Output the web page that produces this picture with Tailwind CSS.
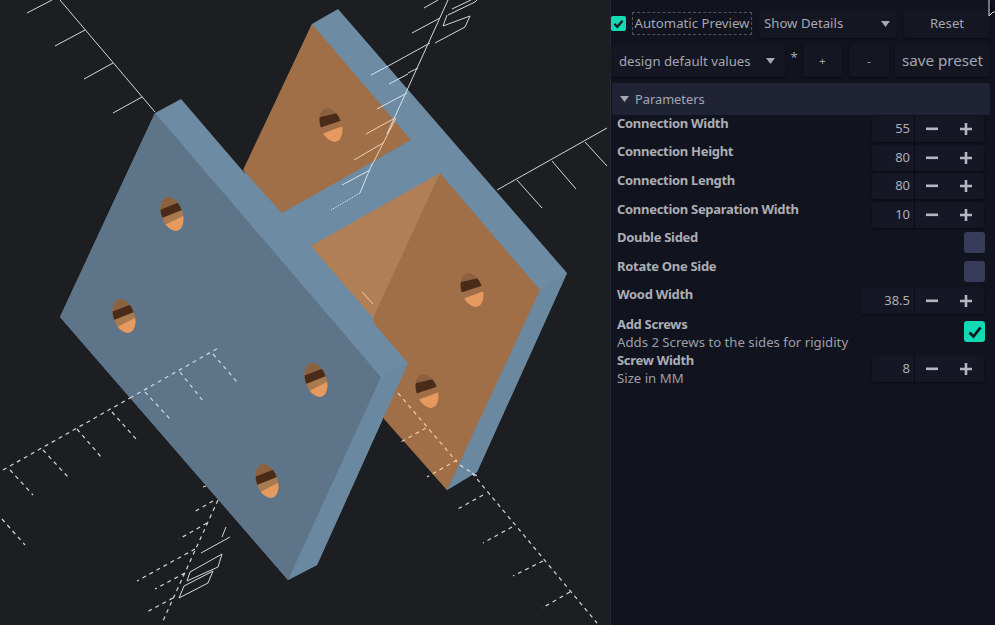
<!DOCTYPE html>
<html lang="en">
<head>
  <meta charset="UTF-8">
  <title>Customizer</title>
  <script src="https://cdn.jsdelivr.net/npm/@tailwindcss/browser@4"></script>
</head>
<body class="bg-[#1c1e21] overflow-hidden">
  <div class="relative flex w-[995px] h-[625px] overflow-hidden font-['Noto_Sans',sans-serif]">

    <!-- 3d preview -->
    <svg class="w-[610px] h-[625px] shrink-0" viewBox="0 0 610 625" fill="none">
      <defs>
        <clipPath id="holeClip"><ellipse rx="10.5" ry="17.5" transform="rotate(-19)"/></clipPath>
        <g id="hole" clip-path="url(#holeClip)">
          <rect x="-15" y="-20" width="30" height="40" fill="#a97a50"/>
          <polygon points="-15,-20 15,-20 15,-15 -15,-3" fill="#8c6140"/>
          <polygon points="-15,-3 15,-15 15,-6 -15,6" fill="#4a2b1a"/>
          <polygon points="-15,15 15,0 15,20 -15,20" fill="#e79a60"/>
        </g>
        <g id="holeBack" clip-path="url(#holeClip)">
          <polygon points="-15,-20 15,-20 15,-14 -15,-7" fill="#8c6140"/>
          <polygon points="-15,-7 15,-14 15,-6 -15,4" fill="#4a2b1a"/>
          <polygon points="-15,11 15,0 15,20 -15,20" fill="#e79a60"/>
        </g>
      </defs>

      <!-- back plate -->
      <polygon points="312,24 338,9 567,273 477,472 447,490 282,300 244,170" fill="#6d8ba3"/>
      <polygon points="540,290 567,273 477,472 447,490" fill="#6a88a0"/>
      <polygon points="312,24 243,170 282,213 411,140" fill="#a06f47"/>
      <polygon points="440,173 540,290 447,490 384,419 373,318" fill="#a06f47"/>
      <polygon points="440,173 311,246 373,318" fill="#b17f56"/>
      <use href="#holeBack" x="331" y="125"/>
      <use href="#holeBack" x="472" y="290"/>
      <use href="#holeBack" x="427" y="391"/>

      <!-- axes behind the plate -->
      <g stroke="#d4d6d8" stroke-width="1">
        <path d="M60 0 155 112M52 0 27 13M85 30 55 46M113 63 84 79M142 97 113 113"/>
        <path d="M497 190 607 128M517 180 542 208M552 161 576 189M585 142 607 166"/>
        <path d="M448 0 408 88M438 0 424 8M440 18 412 33M430 43 390 65M418 68 408 73"/>
        <path d="M452 9 471 0M448 15 475 2 477 0M447 15 443 26 470 16 465 27 435 43"/>
      </g>
      <g stroke="#d8e4ee" stroke-width="1">
        <path d="M408 88 387 134M390 65 371 75M408 74 389 84M407 93 377 109"/>
        <path d="M372 164 360 193M370 170 342 185"/>
        <path d="M360 193 331 210" stroke-dasharray="1.5 1.2"/>
      </g>
      <g stroke="#f0cfa8" stroke-width="1">
        <path d="M396 118 372 165M395 118 366 134M383 143 354 160"/>
        <path d="M362 292 373 304"/>
      </g>

      <!-- dashed axes -->
      <g stroke="#f0cfa8" stroke-width="1.2" stroke-dasharray="4 4">
        <path d="M398 393 457 462M426 428 399 443M457 460 427 477"/>
      </g>
      <path d="M460 465 477 476" stroke="#cfe0ee" stroke-width="1.2" stroke-dasharray="4 4"/>
      <g stroke="#d4d6d8" stroke-width="1.2" stroke-dasharray="4 4">
        <path d="M472 473 597 623M483 495 456 510M512 527 483 543M543 561 513 576M570 592 542 608"/>
      </g>

      <!-- front plate -->
      <polygon points="155,113 181,99 408,363 317,565 288,580 60,317" fill="#6d8ba3"/>
      <polygon points="381,377 408,363 317,565 288,580" fill="#6a88a0"/>
      <polygon points="155,113 60,317 288,580 381,377" fill="#5d7489"/>
      <use href="#hole" x="172" y="214"/>
      <use href="#hole" x="124" y="316"/>
      <use href="#hole" x="316" y="380"/>
      <use href="#hole" x="267" y="481"/>

      <g stroke="#d4d6d8" stroke-width="1.2" stroke-dasharray="4 4">
        <path d="M3 470 130 398M10 470 33 495M43 450 68 477M77 429 102 458M112 412 136 439M2 519 25 545"/>
        <path d="M218 500 162 623M213 501 192 513M207 523 179 539M195 549 137 581M185 573 155 589M173 598 145 613M203 487 206 486"/>
      </g>
      <g stroke="#c6dbea" stroke-width="1.2" stroke-dasharray="4 4">
        <path d="M130 398 220 347M145 392 170 419M180 372 203 401M213 354 237 382"/>
      </g>
      <path d="M226 527 222 537M230 537 201 553M222 554 190 572 187 581 218 567ZM213 571 208 583 179 598 184 586Z" stroke="#d4d6d8" stroke-width="1"/>
    </svg>

    <!-- side panel -->
    <div class="w-[385px] h-[625px] bg-[#11131e] border-l border-[#262a38] text-[#a4a7b0]">
      <div class="flex items-center pt-[9px] h-[38px] text-[13.2px]">
        <span class="w-[15px] h-[15px] rounded-[2px] bg-[#12d8b4] flex items-center justify-center">
          <svg class="w-[13px] h-[13px]" viewBox="0 0 16 16" fill="none"><path d="M3 8.5 6.5 12 13 4.5" stroke="#14161f" stroke-width="2.8"/></svg>
        </span>
        <span class="ml-[6px] w-[120px] h-[23px] border border-dashed border-[#50535f] flex items-center justify-center whitespace-nowrap">Automatic Preview</span>
        <div class="ml-[7px] w-[138px] h-[29px] rounded-[3px] bg-[#141622] shadow-[0_1px_2px_#0a0b12] flex items-center justify-between pl-[5px] pr-[7px]">
          <span>Show Details</span>
          <svg class="w-[9px] h-[6px]" viewBox="0 0 9 6"><polygon points="0,0 9,0 4.5,6" fill="#a4a7b0"/></svg>
        </div>
        <div class="ml-[7px] w-[86px] h-[29px] rounded-[3px] bg-[#141622] shadow-[0_1px_2px_#0a0b12] flex items-center justify-center">Reset</div>
      </div>

      <div class="flex items-center mt-[7px] h-[32px]">
        <div class="w-[174px] h-[32px] rounded-[3px] bg-[#141622] shadow-[0_1px_2px_#0a0b12] flex items-center justify-between pl-[8px] pr-[10px] text-[13.2px]">
          <span class="mt-[2px]">design default values</span>
          <svg class="w-[9px] h-[6px]" viewBox="0 0 9 6"><polygon points="0,0 9,0 4.5,6" fill="#a4a7b0"/></svg>
        </div>
        <span class="w-[18px] text-center text-[13px] -mt-[6px]">*</span>
        <div class="w-[39px] h-[32px] rounded-[3px] bg-[#141622] shadow-[0_1px_2px_#0a0b12] flex items-center justify-center text-[11px]">+</div>
        <div class="ml-[7px] w-[40px] h-[32px] rounded-[3px] bg-[#141622] shadow-[0_1px_2px_#0a0b12] flex items-center justify-center text-[11px]">-</div>
        <div class="ml-[6px] w-[95px] h-[32px] rounded-[3px] bg-[#141622] shadow-[0_1px_2px_#0a0b12] flex items-center justify-center text-[15.2px] whitespace-nowrap pb-[2px]">save preset</div>
      </div>

      <div class="ml-[1px] mt-[6px] w-[378px] h-[32px] rounded-[2px] bg-[#1f2335] flex items-center pl-[8px] text-[12.8px]">
        <svg class="w-[9px] h-[6px]" viewBox="0 0 9 6"><polygon points="0,0 9,0 4.5,6" fill="#a4a7b0"/></svg>
        <span class="ml-[6px] mt-[1px]">Parameters</span>
      </div>

      <div class="pl-[6px] w-[373px] mt-[1px] text-[13px] tracking-[-0.3px] font-bold text-[#abaeb5]">
        <div class="flex justify-between h-[29px]">
          <span class="leading-[15px]">Connection Width</span>
          <div class="flex h-[26px] rounded-[3px] bg-[#151824] shadow-[0_1px_2px_#0a0b12] font-normal tracking-normal">
            <span class="w-[43px] border-r border-[#0b0c13] flex items-center justify-end pr-[4px] text-[13px]">55</span>
            <span class="w-[69px] flex items-center justify-between pl-[11px] pr-[12px]">
              <svg class="w-[12px] h-[12px]" viewBox="0 0 12 12"><rect x="0" y="4.5" width="12" height="2.6" fill="#b5b8bf"/></svg>
              <svg class="w-[12px] h-[12px]" viewBox="0 0 12 12"><path d="M0 4.7H12V7.3H0ZM4.7 0H7.3V12H4.7Z" fill="#b5b8bf"/></svg>
            </span>
          </div>
        </div>
        <div class="flex justify-between h-[28px]">
          <span class="leading-[15px] -mt-[1px]">Connection Height</span>
          <div class="flex h-[26px] rounded-[3px] bg-[#151824] shadow-[0_1px_2px_#0a0b12] font-normal tracking-normal">
            <span class="w-[43px] border-r border-[#0b0c13] flex items-center justify-end pr-[4px] text-[13px]">80</span>
            <span class="w-[69px] flex items-center justify-between pl-[11px] pr-[12px]">
              <svg class="w-[12px] h-[12px]" viewBox="0 0 12 12"><rect x="0" y="4.5" width="12" height="2.6" fill="#b5b8bf"/></svg>
              <svg class="w-[12px] h-[12px]" viewBox="0 0 12 12"><path d="M0 4.7H12V7.3H0ZM4.7 0H7.3V12H4.7Z" fill="#b5b8bf"/></svg>
            </span>
          </div>
        </div>
        <div class="flex justify-between h-[29px]">
          <span class="leading-[15px]">Connection Length</span>
          <div class="flex h-[26px] rounded-[3px] bg-[#151824] shadow-[0_1px_2px_#0a0b12] font-normal tracking-normal">
            <span class="w-[43px] border-r border-[#0b0c13] flex items-center justify-end pr-[4px] text-[13px]">80</span>
            <span class="w-[69px] flex items-center justify-between pl-[11px] pr-[12px]">
              <svg class="w-[12px] h-[12px]" viewBox="0 0 12 12"><rect x="0" y="4.5" width="12" height="2.6" fill="#b5b8bf"/></svg>
              <svg class="w-[12px] h-[12px]" viewBox="0 0 12 12"><path d="M0 4.7H12V7.3H0ZM4.7 0H7.3V12H4.7Z" fill="#b5b8bf"/></svg>
            </span>
          </div>
        </div>
        <div class="flex justify-between h-[30px]">
          <span class="leading-[15px]">Connection Separation Width</span>
          <div class="flex h-[26px] rounded-[3px] bg-[#151824] shadow-[0_1px_2px_#0a0b12] font-normal tracking-normal">
            <span class="w-[43px] border-r border-[#0b0c13] flex items-center justify-end pr-[4px] text-[13px]">10</span>
            <span class="w-[69px] flex items-center justify-between pl-[11px] pr-[12px]">
              <svg class="w-[12px] h-[12px]" viewBox="0 0 12 12"><rect x="0" y="4.5" width="12" height="2.6" fill="#b5b8bf"/></svg>
              <svg class="w-[12px] h-[12px]" viewBox="0 0 12 12"><path d="M0 4.7H12V7.3H0ZM4.7 0H7.3V12H4.7Z" fill="#b5b8bf"/></svg>
            </span>
          </div>
        </div>
        <div class="flex justify-between h-[29px]">
          <span class="leading-[15px] -mt-[2px]">Double Sided</span>
          <span class="w-[21px] h-[21px] -mr-[1px] rounded-[3px] bg-[#363c59]"></span>
        </div>
        <div class="flex justify-between h-[26px]">
          <span class="leading-[15px] -mt-[2px]">Rotate One Side</span>
          <span class="w-[21px] h-[21px] -mr-[1px] rounded-[3px] bg-[#363c59]"></span>
        </div>
        <div class="flex justify-between h-[29px]">
          <span class="leading-[15px]">Wood Width</span>
          <div class="flex h-[27px] rounded-[3px] bg-[#151824] shadow-[0_1px_2px_#0a0b12] font-normal tracking-normal">
            <span class="w-[54px] border-r border-[#0b0c13] flex items-center justify-end pr-[4px] text-[13px]">38.5</span>
            <span class="w-[69px] flex items-center justify-between pl-[11px] pr-[12px]">
              <svg class="w-[12px] h-[12px]" viewBox="0 0 12 12"><rect x="0" y="4.5" width="12" height="2.6" fill="#b5b8bf"/></svg>
              <svg class="w-[12px] h-[12px]" viewBox="0 0 12 12"><path d="M0 4.7H12V7.3H0ZM4.7 0H7.3V12H4.7Z" fill="#b5b8bf"/></svg>
            </span>
          </div>
        </div>
        <div class="flex justify-between h-[39px]">
          <div class="leading-[18px] -mt-[1px]">
            <div>Add Screws</div>
            <div class="font-normal text-[#9c9fa8] text-[13.2px] tracking-normal">Adds 2 Screws to the sides for rigidity</div>
          </div>
          <span class="w-[21px] h-[21px] mt-[5px] -mr-[1px] rounded-[3px] bg-[#12d8b4] flex items-center justify-center">
            <svg class="w-[16px] h-[16px]" viewBox="0 0 16 16" fill="none"><path d="M2.5 8.5 6.5 12.5 13.5 3.5" stroke="#14161f" stroke-width="2.8"/></svg>
          </span>
        </div>
        <div class="flex justify-between h-[40px]">
          <div class="leading-[18px] -mt-[4px]">
            <div>Screw Width</div>
            <div class="font-normal text-[#9c9fa8] text-[13.2px] tracking-normal">Size in MM</div>
          </div>
          <div class="flex h-[27px] rounded-[3px] bg-[#151824] shadow-[0_1px_2px_#0a0b12] font-normal tracking-normal">
            <span class="w-[43px] border-r border-[#0b0c13] flex items-center justify-end pr-[4px] text-[13px]">8</span>
            <span class="w-[69px] flex items-center justify-between pl-[11px] pr-[12px]">
              <svg class="w-[12px] h-[12px]" viewBox="0 0 12 12"><rect x="0" y="4.5" width="12" height="2.6" fill="#b5b8bf"/></svg>
              <svg class="w-[12px] h-[12px]" viewBox="0 0 12 12"><path d="M0 4.7H12V7.3H0ZM4.7 0H7.3V12H4.7Z" fill="#b5b8bf"/></svg>
            </span>
          </div>
        </div>
      </div>
    </div>

    <!-- mouse pointer -->
    <svg class="absolute left-[988px] top-0 w-[7px] h-[18px]" viewBox="0 0 7 18" fill="none"><path d="M1 0V16L5 12H8" fill="#0c0d12" stroke="#d8d9dc" stroke-width="1"/></svg>
  </div>
</body>
</html>
